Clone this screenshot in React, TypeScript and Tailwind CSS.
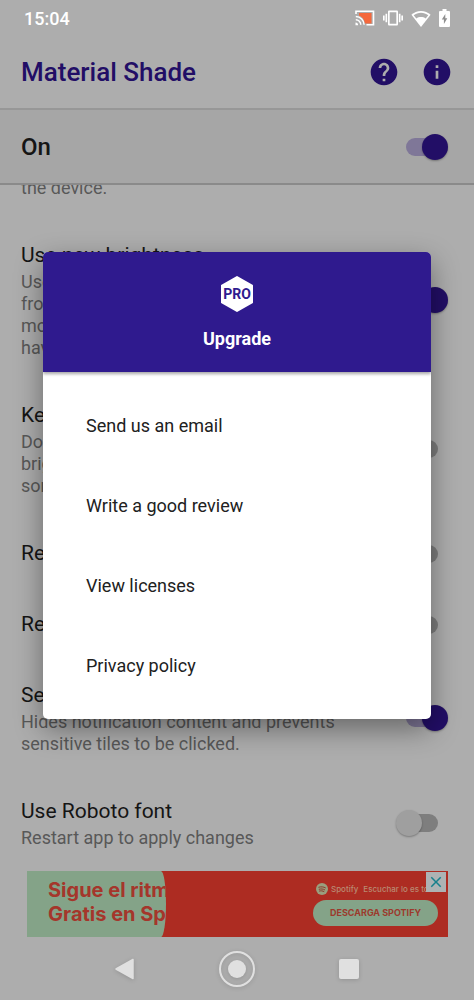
import { MdClose, MdHelp, MdInfo, MdVibration } from 'react-icons/md';
import { clsx } from 'clsx';

interface Setting {
  id: string;
  title?: string;
  summary?: string;
  checked?: boolean;
}

const settings: Setting[] = [
  { id: 'device', summary: 'the device.' },
  {
    id: 'brightness',
    title: 'Use new brightness',
    summary: 'Use the new brightness values\nfrom the latest system. Some\nmodels with older versions\nhave a different range.',
    checked: true,
  },
  {
    id: 'keep',
    title: 'Keep brightness',
    summary: "Doesn't change automatic\nbrightness. May not work on\nsome devices.",
    checked: false,
  },
  { id: 'recents', title: 'Remove icons', checked: false },
  { id: 'reverse', title: 'Reverse order', checked: false },
  {
    id: 'sensitive',
    title: 'Sensitive content',
    summary: 'Hides notification content and prevents\nsensitive tiles to be clicked.',
    checked: true,
  },
  { id: 'roboto', title: 'Use Roboto font', summary: 'Restart app to apply changes', checked: false },
];

const menuItems = ['Send us an email', 'Write a good review', 'View licenses', 'Privacy policy'];

function Switch({ id, checked }: { id: string; checked?: boolean }) {
  return (
    <input
      id={id}
      type="checkbox"
      role="switch"
      defaultChecked={checked}
      className={clsx(
        'relative h-[26px] w-[52px] shrink-0 appearance-none',
        "before:absolute before:left-[10px] before:top-1 before:h-[18px] before:w-8 before:rounded-full before:bg-[#7e7e7e] before:content-['']",
        "after:absolute after:left-0 after:top-0 after:size-[26px] after:rounded-full after:bg-[#9f9f9f] after:shadow-[0_1px_2px_rgba(0,0,0,0.3)] after:content-['']",
        'checked:before:bg-[#7f7798] checked:after:left-[26px] checked:after:bg-[#220e66]'
      )}
    />
  );
}

function StatusBar() {
  return (
    <div className="flex h-9 items-center justify-between pl-6 pr-6 text-white">
      <span className="text-[18px] font-medium">15:04</span>
      <div className="flex items-center gap-2">
        <svg className="h-4 w-5" viewBox="0 0 20 16" fill="none">
          <path d="M4 3h12.5v10.5H10C9.300 9.500 7 6.500 4 5.800z" fill="#f4683c" />
          <path d="M1 4V1.200h17.500v13.600H11.500" stroke="currentColor" strokeWidth="1.600" />
          <path d="M.8 6.500a8.300 8.300 0 0 1 8.300 8.300M.8 9.800a5 5 0 0 1 5 5" stroke="currentColor" strokeWidth="1.400" />
          <path d="M.5 12.600a2.600 2.600 0 0 1 2.600 2.600H.5z" fill="currentColor" />
        </svg>
        <MdVibration className="size-5" />
        <svg className="h-[17px] w-5" viewBox="0 0 20 17">
          <path d="M10 17 .4 4.800C3 2.500 6.300 1 10 1s7 1.500 9.600 3.800z" fill="currentColor" />
          <path d="M2.700 5.200C4.800 3.600 7.300 2.700 10 2.700s5.200.9 7.300 2.500l-2.600 3.300C13.300 7.600 11.700 7.100 10 7.100s-3.300.5-4.700 1.400z" fill="#adadad" />
        </svg>
        <svg className="h-[18px] w-[11px]" viewBox="0 0 11 18">
          <path d="M3.500 0h4v2H10a1 1 0 0 1 1 1v14a1 1 0 0 1-1 1H1a1 1 0 0 1-1-1V3a1 1 0 0 1 1-1h2.500z" fill="currentColor" />
          <path d="M6.300 5 2.800 10.600h2.100V15l3.400-5.800H6.300z" fill="#8f8f8f" />
        </svg>
      </div>
    </div>
  );
}

function SettingRow({ setting }: { setting: Setting }) {
  const { id, title, summary, checked } = setting;
  return (
    <label htmlFor={id} className="flex items-center justify-between py-[21px] pl-[21px] pr-[26px]">
      <span className="flex flex-col whitespace-pre">
        {title && <span className="text-[21px] leading-[29px] text-[#151515]">{title}</span>}
        {summary && <span className={clsx('text-[18px] leading-[22px] text-[#585858]', title && 'mt-px')}>{summary}</span>}
      </span>
      {title && <Switch id={id} checked={checked} />}
    </label>
  );
}

function AdBanner() {
  return (
    <aside className="relative ml-[27px] mr-[26px] flex h-[66px] justify-between bg-[#ad2c22] font-[Inter,sans-serif] font-bold">
      <p className="w-[139px] overflow-hidden whitespace-pre bg-[#84a388] pl-[21px] pt-[7px] text-[20px] leading-6 text-[#a5362b] [border-radius:0_5px_5px_0/0_50%_50%_0]">
        {'Sigue el ritmo\nGratis en Spotify'}
      </p>
      <div className="mr-[10px] flex w-[125px] flex-col gap-[5px] pt-[11px]">
        <div className="flex h-[13px] items-center gap-[3px] overflow-hidden whitespace-nowrap pl-[3px] text-[8px] font-medium text-[#b98a72]">
          <svg className="size-3 shrink-0" viewBox="0 0 12 12" fill="none">
            <circle cx="6" cy="6" r="6" fill="#9a9f7e" />
            <path d="M2.800 4.200c2.200-.7 4.700-.5 6.600.6M3.200 6.200c1.900-.5 3.900-.3 5.500.6M3.500 8c1.500-.4 3-.2 4.400.5" stroke="#8a3a2c" strokeLinecap="round" />
          </svg>
          <span>Spotify</span>
          <span className="pl-0.5">Escuchar lo es todo</span>
        </div>
        <button className="h-[26px] rounded-full bg-[#84a388] text-[9px] text-[#9c3a2d]">DESCARGA SPOTIFY</button>
      </div>
      <button aria-label="Close ad" className="absolute right-0.5 top-px flex size-5 items-center justify-center bg-[#adb3b4] text-[#17808c]">
        <MdClose className="size-[18px]" />
      </button>
    </aside>
  );
}

function NavBar() {
  return (
    <nav className="flex h-[63px] items-center justify-center gap-[76px] text-[#e0e0e0]">
      <button aria-label="Back">
        <svg className="size-9 drop-shadow-sm" viewBox="0 0 36 36" fill="currentColor" stroke="currentColor" strokeWidth="1.500" strokeLinejoin="round">
          <path d="M9 18 26 8.500v19z" />
        </svg>
      </button>
      <button aria-label="Home">
        <svg className="size-9 drop-shadow-sm" viewBox="0 0 36 36" fill="none" stroke="currentColor" strokeWidth="2">
          <circle cx="18" cy="18" r="17" />
          <circle cx="18" cy="18" r="9" fill="currentColor" stroke="none" />
        </svg>
      </button>
      <button aria-label="Recents">
        <svg className="size-9 drop-shadow-sm" viewBox="0 0 36 36" fill="currentColor">
          <rect x="8" y="8" width="20" height="20" rx="2" />
        </svg>
      </button>
    </nav>
  );
}

function UpgradeDialog() {
  return (
    <div className="absolute inset-0 flex items-center justify-center px-[43px] pb-[65px] pt-9">
      <div role="dialog" aria-label="Upgrade" className="w-full overflow-hidden rounded-[5px] bg-white shadow-[0_10px_28px_rgba(0,0,0,0.4)]">
        <button className="relative flex h-[120px] w-full flex-col items-center gap-3 bg-[#2f1a8e] pt-6 text-white shadow-[0_2px_3px_rgba(0,0,0,0.35)]">
          <svg className="h-9 w-[34px]" viewBox="0 0 34 36">
            <path d="M17 1 32 9.500v17L17 35 2 26.500v-17z" fill="#fff" stroke="#fff" strokeWidth="2" strokeLinejoin="round" />
            <text x="17" y="23" textAnchor="middle" className="fill-[#2f1a8e] font-[Roboto,sans-serif] text-[14px] font-bold">
              PRO
            </text>
          </svg>
          <span className="text-[18px] font-bold leading-[30px]">Upgrade</span>
        </button>
        <ul className="pb-[14px] pt-[13px]">
          {menuItems.map((item) => (
            <li key={item}>
              <button className="h-20 w-full pl-[43px] text-left text-[18px] text-[#212121]">{item}</button>
            </li>
          ))}
        </ul>
      </div>
    </div>
  );
}

export default function App() {
  return (
    <div className="relative flex min-h-screen flex-col bg-[#adadad] font-[Roboto,sans-serif]">
      <StatusBar />
      <header className="flex h-[72px] items-center justify-between pl-[21px] pr-[21px] text-[#220e66]">
        <h1 className="text-[26px] font-medium">Material Shade</h1>
        <div className="flex gap-[21px]">
          <button aria-label="Help">
            <MdHelp className="size-8" />
          </button>
          <button aria-label="About">
            <MdInfo className="size-8" />
          </button>
        </div>
      </header>
      <label
        htmlFor="main"
        className="flex h-[77px] items-center justify-between border-b-2 border-t-2 border-b-[#8a8a8a] border-t-[#979797] bg-[#a6a6a6] pl-[21px] pr-[26px] text-[24px] font-medium text-[#151515]"
      >
        On
        <Switch id="main" checked />
      </label>
      <main className="flex-1 overflow-hidden">
        <div className="-mt-[29px]">
          {settings.map((setting) => (
            <SettingRow key={setting.id} setting={setting} />
          ))}
        </div>
      </main>
      <AdBanner />
      <NavBar />
      <UpgradeDialog />
    </div>
  );
}
